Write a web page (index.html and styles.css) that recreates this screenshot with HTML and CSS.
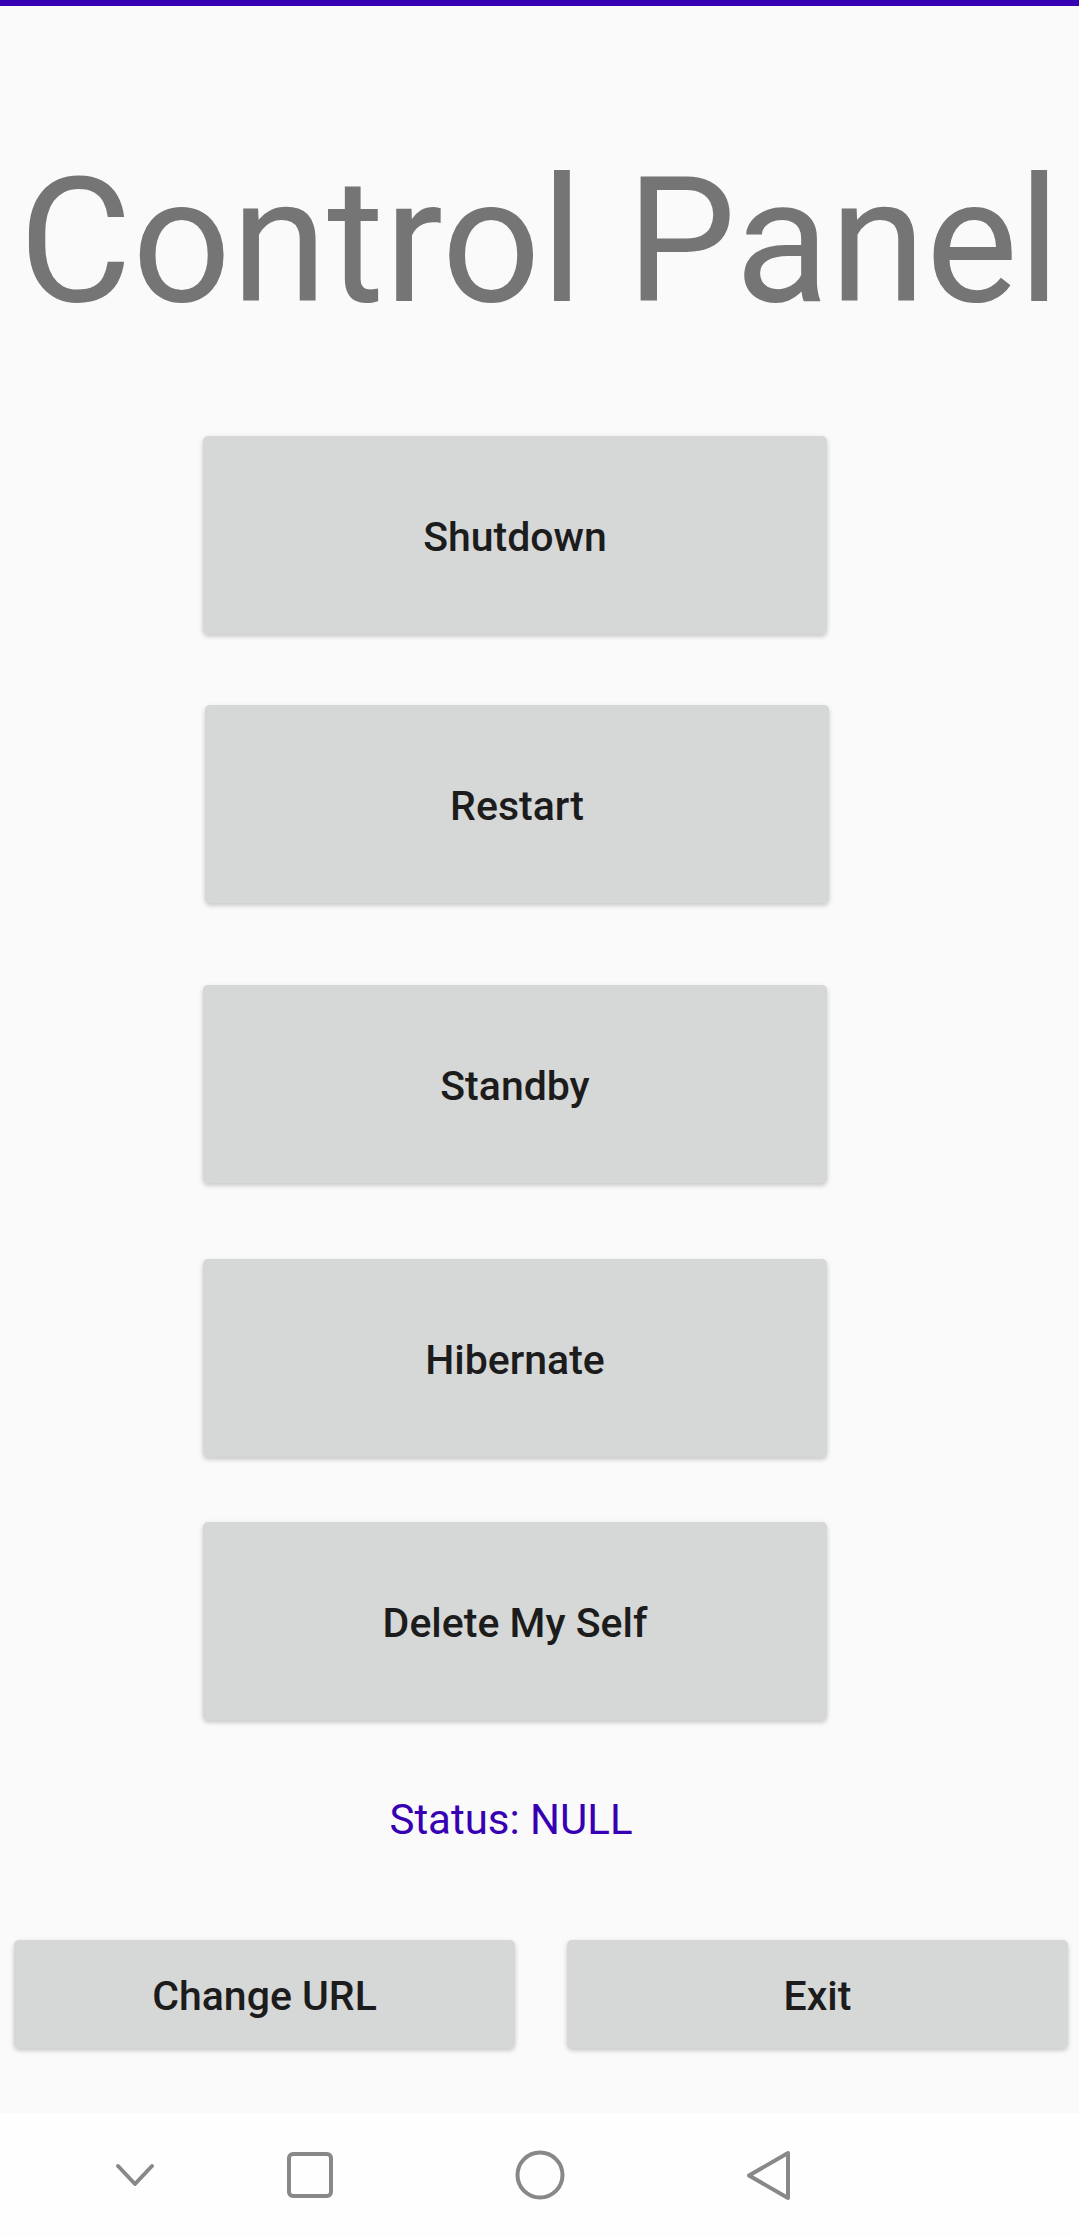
FILE: index.html
```html
<!DOCTYPE html>
<html lang="en">
<head>
<meta charset="utf-8">
<title>Control Panel</title>
<link rel="stylesheet" href="styles.css">
</head>
<body>
<div class="topbar"></div>
<main class="screen">
  <h1 class="title">Control Panel</h1>
  <div class="actions">
    <button class="btn btn--big">Shutdown</button>
    <button class="btn btn--big btn--restart">Restart</button>
    <button class="btn btn--big btn--standby">Standby</button>
    <button class="btn btn--big btn--hibernate">Hibernate</button>
    <button class="btn btn--big btn--delete">Delete My Self</button>
    <p class="status">Status: NULL</p>
  </div>
  <div class="bottom-row">
    <button class="btn btn--wide">Change URL</button>
    <button class="btn btn--wide">Exit</button>
  </div>
</main>
<nav class="navbar">
  <svg class="nav-icon nav-icon--chevron" width="40" height="24" viewBox="0 0 40 24"><polyline points="3,3 20,21 37,3" fill="none" stroke="#888" stroke-width="4" stroke-linecap="round" stroke-linejoin="round"/></svg>
  <svg class="nav-icon nav-icon--square" width="48" height="48" viewBox="0 0 48 48"><rect x="3" y="3" width="42" height="42" rx="4" fill="none" stroke="#888" stroke-width="4"/></svg>
  <svg class="nav-icon nav-icon--circle" width="52" height="52" viewBox="0 0 52 52"><circle cx="26" cy="26" r="22.5" fill="none" stroke="#888" stroke-width="4"/></svg>
  <svg class="nav-icon nav-icon--back" width="50" height="52" viewBox="0 0 50 52"><polygon points="44,4 44,49 5,26.5" fill="none" stroke="#888" stroke-width="4" stroke-linejoin="round"/></svg>
</nav>
</body>
</html>
```
FILE: styles.css
```css
* { box-sizing: border-box; }
html, body {
  margin: 0;
  padding: 0;
}
body {
  width: 1079px;
  height: 2236px;
  background: #fafafa;
  font-family: Roboto, "Noto Sans", "Liberation Sans", sans-serif;
  display: flex;
  flex-direction: column;
  overflow: hidden;
}
.topbar {
  height: 6px;
  background: #3700b3;
  flex: none;
}
.screen {
  height: 2107px;
  display: flex;
  flex-direction: column;
  flex: none;
}
.title {
  margin: 133px 0 0;
  font-size: 174px;
  line-height: 206px;
  font-weight: 400;
  color: #757575;
  text-align: center;
  white-space: nowrap;
}
.actions {
  margin: 91px 0 0 203px;
  width: 624px;
  display: flex;
  flex-direction: column;
}
.btn {
  border: none;
  background: #d6d7d7;
  border-radius: 5px;
  font-family: inherit;
  font-weight: 500;
  font-size: 41px;
  line-height: 48px;
  color: #1c1c1c;
  box-shadow: 0 3px 4px rgba(0,0,0,0.14), 0 1px 6px rgba(0,0,0,0.08);
  padding: 3px 0 0;
  text-align: center;
}
.btn--big {
  width: 624px;
  height: 198px;
}
.btn--restart { margin: 71px 0 0 2px; }
.btn--standby { margin-top: 82px; }
.btn--hibernate { margin-top: 76px; }
.btn--delete { margin-top: 65px; }
.status {
  margin: 76px 0 0;
  font-size: 42px;
  line-height: 48px;
  color: #3700b3;
  text-align: center;
  padding-right: 8px;
}
.bottom-row {
  margin-top: 96px;
  padding: 0 11px 0 14px;
  display: flex;
  gap: 52px;
}
.btn--wide {
  flex: 1;
  height: 108px;
}
.navbar {
  height: 123px;
  background: #fefefe;
  display: flex;
  align-items: center;
  padding-left: 115px;
  flex: none;
}
.nav-icon { display: block; flex: none; }
.nav-icon--square { margin-left: 131px; }
.nav-icon--circle { margin-left: 180px; }
.nav-icon--back { margin-left: 178px; }
```
